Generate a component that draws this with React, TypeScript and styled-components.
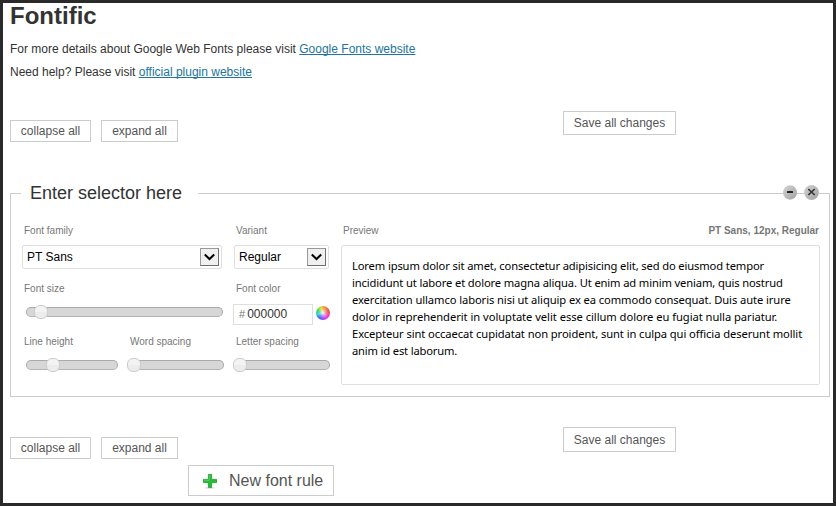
import React from "react";
import styled, { createGlobalStyle } from "styled-components";

const GlobalStyle = createGlobalStyle`
  * { box-sizing: border-box; }
  body { margin: 0; background: #fff; font-family: "Liberation Sans", Arial, sans-serif; }
`;

const Page = styled.main`
  width: 836px;
  height: 506px;
  overflow: hidden;
  border: 3px solid #2b2a2b;
  padding-left: 7px;
  background: #fff;
  display: flex;
  flex-direction: column;
  font-size: 12px;
  color: #333;
`;

const Title = styled.h1`
  margin: 0;
  height: 35px;
  font-size: 24px;
  line-height: 26px;
  font-weight: bold;
  color: #333;
`;

const Info = styled.p`
  margin: 0;
  height: 23px;
  line-height: 23px;
  white-space: nowrap;
`;

const Link = styled.a`
  color: #21759b;
  text-decoration: underline;
  text-decoration-skip-ink: none;
  text-underline-offset: 1px;
`;

const ActionBar = styled.div<{ $top: number }>`
  display: flex;
  align-items: flex-start;
  gap: 10px;
  height: 32px;
  margin-top: ${(p) => p.$top}px;
`;

const Button = styled.button<{ $w: number; $h: number; $drop?: number; $push?: number }>`
  width: ${(p) => p.$w}px;
  height: ${(p) => p.$h}px;
  margin: ${(p) => p.$drop ?? 0}px 0 0 ${(p) => p.$push ?? 0}px;
  padding: 0;
  border: 1px solid #ccc;
  background: #fff;
  color: #555;
  font: 12px "Liberation Sans", Arial, sans-serif;
  white-space: nowrap;
`;

const Panel = styled.section<{ $top: number }>`
  width: 820px;
  margin-top: ${(p) => p.$top}px;
`;

const PanelHead = styled.header`
  display: flex;
  align-items: flex-end;
  height: 18px;
`;

const Rule = styled.span<{ $w?: number; $edge?: "left" | "right" }>`
  height: 9px;
  flex: ${(p) => (p.$w ? `0 0 ${p.$w}px` : "1 1 0")};
  border-top: 1px solid #ccc;
  ${(p) => p.$edge && `border-${p.$edge}: 1px solid #ccc;`}
`;

const Legend = styled.h2`
  margin: 0;
  width: 177px;
  padding-left: 9px;
  font-size: 18px;
  font-weight: normal;
  line-height: 18px;
  color: #333;
  white-space: nowrap;
`;

const RoundIcon = styled.svg`
  display: block;
  flex: none;
  margin-bottom: 2px;
`;

const PanelBody = styled.div`
  display: grid;
  grid-template-columns: 319px 479px;
  height: 195px;
  border: 1px solid #ccc;
  border-top: 0;
  padding: 21px 0 0 11px;
`;

const Controls = styled.div`
  display: flex;
  flex-direction: column;
`;

const ControlRow = styled.div<{ $cols: string; $h: number }>`
  display: grid;
  grid-template-columns: ${(p) => p.$cols};
  height: ${(p) => p.$h}px;
`;

const Field = styled.div`
  display: flex;
  flex-direction: column;
  align-items: flex-start;
`;

const Label = styled.label`
  height: 16px;
  padding-left: 2px;
  font-size: 10px;
  line-height: 16px;
  color: #777;
  white-space: nowrap;
`;

const SelectBox = styled.div<{ $w: number }>`
  width: ${(p) => p.$w}px;
  height: 24px;
  margin-top: 6px;
  padding: 0 2px 0 4px;
  border: 1px solid #dfdfdf;
  border-radius: 2px;
  display: flex;
  align-items: center;
  justify-content: space-between;
  color: #000;
`;

const Arrow = styled.span`
  width: 19px;
  height: 18px;
  border: 1px solid #707070;
  border-top-color: #999;
  border-left-color: #999;
  background: #f0f0f0;
  display: flex;
  align-items: center;
  justify-content: center;
`;

const ColorLine = styled.div`
  display: flex;
  align-items: center;
  gap: 3px;
  margin: 7px 0 0 -1px;
`;

const ColorInput = styled.div`
  width: 80px;
  height: 21px;
  padding-left: 5px;
  border: 1px solid #dfdfdf;
  color: #333;
  line-height: 19px;
`;

const Hash = styled.span`
  font-size: 11px;
  color: #777;
  margin-right: 2px;
`;

const Wheel = styled.div`
  width: 14px;
  height: 14px;
  margin-top: -3px;
  border-radius: 50%;
  background:
    radial-gradient(circle, rgba(255, 255, 255, 0.95) 0, rgba(255, 255, 255, 0.35) 32%, rgba(255, 255, 255, 0) 60%),
    conic-gradient(#f5a03c, #f0803c 30deg, #f04848 75deg, #f040a0 110deg, #e040e0 145deg, #9048f8 180deg, #3868f0 220deg, #30c8e0 255deg, #28d860 290deg, #80e83c 320deg, #e0d840 345deg, #f5a03c);
`;

const Track = styled.div<{ $w: number; $left: number; $top: number }>`
  width: ${(p) => p.$w}px;
  height: 10px;
  margin: ${(p) => p.$top}px 0 0 ${(p) => p.$left}px;
  border: 1px solid #aaa;
  border-bottom-color: #b4b4b4;
  border-radius: 5px;
  background: #d7d7d7;
  display: flex;
  align-items: center;
`;

const Handle = styled.span<{ $x: number }>`
  flex: none;
  width: 14px;
  height: 14px;
  margin-left: ${(p) => p.$x}px;
  border: 1px solid #ccc;
  border-radius: 6px;
  background: linear-gradient(#f3f3f3 50%, #ececec 50%);
`;

const PreviewHead = styled.div`
  display: flex;
  justify-content: space-between;
  width: 479px;
`;

const Summary = styled.strong`
  padding-right: 1px;
  font-size: 10px;
  line-height: 16px;
  color: #777;
`;

const PreviewBox = styled.div`
  width: 479px;
  height: 140px;
  margin-top: 6px;
  padding: 11px 0 0 10px;
  border: 1px solid #dfdfdf;
  border-radius: 2px;
  font-family: "Noto Sans", sans-serif;
  font-size: 11.2px;
  line-height: 17px;
  color: #000;
`;

const PreviewLine = styled.div<{ $spacing: number }>`
  white-space: nowrap;
  letter-spacing: ${(p) => p.$spacing}px;
`;

const NewRule = styled.button`
  width: 146px;
  height: 31px;
  margin: 6px 0 0 178px;
  padding: 0 0 0 14px;
  border: 1px solid #ccc;
  background: #fff;
  color: #555;
  font: 16px "Liberation Sans", Arial, sans-serif;
  display: flex;
  align-items: center;
  gap: 12px;
  white-space: nowrap;
`;

const previewLines: [string, number][] = [
  ["Lorem ipsum dolor sit amet, consectetur adipisicing elit, sed do eiusmod tempor", -0.135],
  ["incididunt ut labore et dolore magna aliqua. Ut enim ad minim veniam, quis nostrud", -0.134],
  ["exercitation ullamco laboris nisi ut aliquip ex ea commodo consequat. Duis aute irure", -0.09],
  ["dolor in reprehenderit in voluptate velit esse cillum dolore eu fugiat nulla pariatur.", -0.05],
  ["Excepteur sint occaecat cupidatat non proident, sunt in culpa qui officia deserunt mollit", -0.085],
  ["anim id est laborum.", -0.17],
];

function Select({ value, width }: { value: string; width: number }) {
  return (
    <SelectBox $w={width}>
      {value}
      <Arrow>
        <svg width="11" height="8" viewBox="0 0 11 8">
          <path d="M.8 1.5 5.5 6 10.2 1.5" fill="none" stroke="#000" strokeWidth="2" />
        </svg>
      </Arrow>
    </SelectBox>
  );
}

function Slider(p: { width: number; left: number; top: number; handle: number }) {
  return (
    <Track $w={p.width} $left={p.left} $top={p.top}>
      <Handle $x={p.handle} />
    </Track>
  );
}

function Actions({ top, saveHeight, drop }: { top: number; saveHeight: number; drop: number }) {
  return (
    <ActionBar $top={top}>
      <Button $w={81} $h={22} $drop={drop}>collapse all</Button>
      <Button $w={77} $h={22} $drop={drop}>expand all</Button>
      <Button $w={113} $h={saveHeight} $push={375}>Save all changes</Button>
    </ActionBar>
  );
}

export default function App() {
  return (
    <>
      <GlobalStyle />
      <Page>
        <Title>Fontific</Title>
        <Info>
          For more details about Google Web Fonts please visit <Link>Google Fonts website</Link>
        </Info>
        <Info>
          Need help? Please visit <Link>official plugin website</Link>
        </Info>
        <Actions top={27} drop={9} saveHeight={24} />
        <Panel $top={41}>
          <PanelHead>
            <Rule $w={11} $edge="left" />
            <Legend>Enter selector here</Legend>
            <Rule />
            <RoundIcon width="14" height="15" viewBox="0 0 14 15">
              <defs>
                <linearGradient id="disc" x1="0" y1="0" x2="1" y2="1">
                  <stop offset="0" stopColor="#d2d2d2" />
                  <stop offset="1" stopColor="#a2a2a2" />
                </linearGradient>
              </defs>
              <ellipse cx="7" cy="7.5" rx="7" ry="7.2" fill="url(#disc)" />
              <rect x="4" y="6" width="6" height="2" rx="0.5" fill="#222" />
            </RoundIcon>
            <Rule $w={7} />
            <RoundIcon width="15" height="15" viewBox="0 0 15 15">
              <circle cx="7.5" cy="7.5" r="7.4" fill="url(#disc)" />
              <path d="M4.3 4 10.7 10M10.7 4 4.3 10" stroke="#333" strokeWidth="1.7" />
            </RoundIcon>
            <Rule $w={11} $edge="right" />
          </PanelHead>
          <PanelBody>
            <Controls>
              <ControlRow $cols="212px 1fr" $h={58}>
                <Field>
                  <Label>Font family</Label>
                  <Select value="PT Sans" width={200} />
                </Field>
                <Field>
                  <Label>Variant</Label>
                  <Select value="Regular" width={95} />
                </Field>
              </ControlRow>
              <ControlRow $cols="212px 1fr" $h={53}>
                <Field>
                  <Label>Font size</Label>
                  <Slider width={197} left={4} top={10} handle={7} />
                </Field>
                <Field>
                  <Label>Font color</Label>
                  <ColorLine>
                    <ColorInput><Hash>#</Hash>000000</ColorInput>
                    <Wheel />
                  </ColorLine>
                </Field>
              </ControlRow>
              <ControlRow $cols="106px 106px 1fr" $h={50}>
                <Field>
                  <Label>Line height</Label>
                  <Slider width={92} left={4} top={10} handle={19} />
                </Field>
                <Field>
                  <Label>Word spacing</Label>
                  <Slider width={94} left={2} top={10} handle={-4} />
                </Field>
                <Field>
                  <Label>Letter spacing</Label>
                  <Slider width={94} left={2} top={10} handle={-4} />
                </Field>
              </ControlRow>
            </Controls>
            <div>
              <PreviewHead>
                <Label>Preview</Label>
                <Summary>PT Sans, 12px, Regular</Summary>
              </PreviewHead>
              <PreviewBox>
                {previewLines.map(([text, spacing]) => (
                  <PreviewLine key={text} $spacing={spacing}>{text}</PreviewLine>
                ))}
              </PreviewBox>
            </div>
          </PanelBody>
        </Panel>
        <Actions top={30} drop={10} saveHeight={25} />
        <NewRule>
          <svg width="14" height="16" viewBox="0 0 14 16">
            <ellipse cx="7" cy="14.9" rx="5" ry="0.8" fill="#ddd" />
            <path d="M5.4 1.4h3.2v5h5v3.2h-5v4.8H5.4V9.6h-5V6.4h5z" fill="#25bd38" stroke="#169a2a" strokeWidth="0.8" />
            <path d="M6.3 2.2v5.1H1.3" fill="none" stroke="#6fd97b" strokeWidth="0.7" />
          </svg>
          New font rule
        </NewRule>
      </Page>
    </>
  );
}
